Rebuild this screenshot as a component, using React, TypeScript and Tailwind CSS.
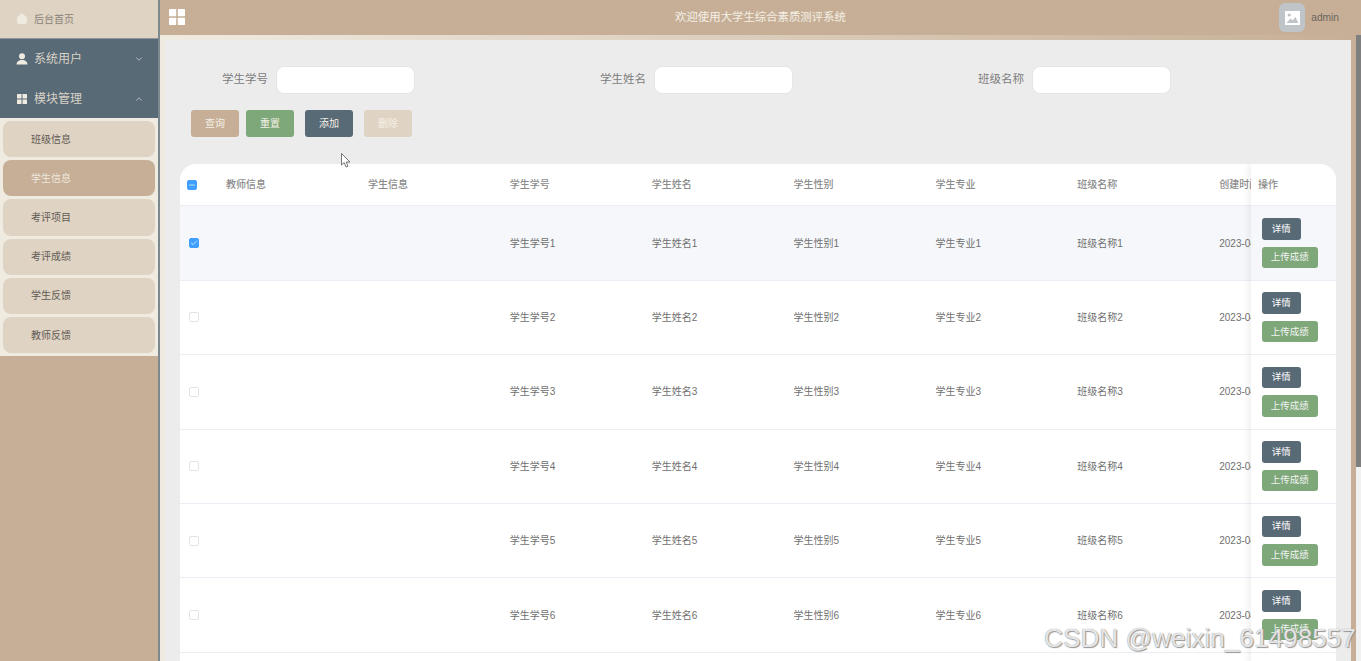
import { ChevronDown, ChevronUp, Check, House, Minus } from "lucide-react";

const FONT = "font-['Liberation_Sans','Noto_Sans_CJK_SC',sans-serif]";
const columns = ["教师信息", "学生信息", "学生学号", "学生姓名", "学生性别", "学生专业", "班级名称", "创建时间"];
const menuItems = ["班级信息", "学生信息", "考评项目", "考评成绩", "学生反馈", "教师反馈"];
const rows = [1, 2, 3, 4, 5, 6];

function GridIcon({ size, className }: { size: number; className?: string }) {
  return (
    <svg width={size} height={size} viewBox="0 0 16 16" className={className} fill="currentColor">
      <rect x="0" y="0" width="7.2" height="7.2" rx="0.4" />
      <rect x="8.8" y="0" width="7.2" height="7.2" rx="0.4" />
      <rect x="0" y="8.8" width="7.2" height="7.2" rx="0.4" />
      <rect x="8.8" y="8.8" width="7.2" height="7.2" rx="0.4" />
    </svg>
  );
}

function PersonIcon() {
  return (
    <svg width="12" height="12" viewBox="0 0 12 12" fill="#f0ebe1">
      <circle cx="6" cy="3.2" r="3" />
      <path d="M0.5 11.5C0.5 8.8 2.6 7 6 7C9.4 7 11.5 8.8 11.5 11.5Z" />
    </svg>
  );
}

function Field({ label }: { label: string }) {
  return (
    <div className="flex w-[378px] items-center">
      <span className="w-[96px] pr-2 text-right text-[11.5px] text-[#7d7d7d]">{label}</span>
      <div className="h-[28px] w-[139px] rounded-lg border border-[#e6e6e6] bg-white" />
    </div>
  );
}

function Sidebar() {
  return (
    <aside className="flex h-full w-[160px] shrink-0 flex-col border-r-2 border-[#7c8a90] bg-[#c6af96]">
      <div className="flex h-[39px] items-center gap-[6px] border-b border-[#8d979b] bg-[#dfd3c3] pl-[16px] text-[10px] text-[#8a8278]">
        <House size={12} className="fill-[#f0ebe1] text-[#f0ebe1]" />
        后台首页
      </div>
      <div className="bg-[#586a76] text-[12px] text-[#d9d2c6]">
        <div className="flex h-[39px] items-center pl-[16px] pr-[14px]">
          <PersonIcon />
          <span className="ml-[6px] flex-1">系统用户</span>
          <ChevronDown size={10} className="text-[#c8ced0]" />
        </div>
        <div className="flex h-[40px] items-center pl-[17px] pr-[14px] pt-[1px]">
          <GridIcon size={10} className="text-[#f0ebe1]" />
          <span className="ml-[7px] flex-1">模块管理</span>
          <ChevronUp size={10} className="text-[#c8ced0]" />
        </div>
      </div>
      <div className="flex flex-col gap-[3px] bg-[#f0ebe1] px-[3px] pb-[3px] pt-[3px]">
        {menuItems.map((item) => (
          <div
            key={item}
            className={`flex h-[36.2px] items-center rounded-lg pl-[28px] text-[10px] ${
              item === "学生信息" ? "bg-[#c6af96] text-[#efe8dc]" : "bg-[#dfd3c3] text-[#5f5a54]"
            }`}
          >
            {item}
          </div>
        ))}
      </div>
    </aside>
  );
}

function Header() {
  return (
    <header className="grid h-[35px] shrink-0 grid-cols-[1fr_auto_1fr] items-center bg-[#c6af96] px-[9px]">
      <GridIcon size={16} className="-mt-[2px] text-white" />
      <div className="text-center text-[11.4px] text-[#f5f0e6]">欢迎使用大学生综合素质测评系统</div>
      <div className="flex items-center justify-end pr-[13px]">
        <div className="flex h-[29px] w-[26px] items-center justify-center rounded-md bg-[#bfc4c8]">
          <svg width="15" height="14" viewBox="0 0 15 14">
            <rect width="15" height="14" fill="#fff" />
            <circle cx="4.2" cy="4" r="1.6" fill="#bfc4c8" />
            <path d="M1.5 12L5.5 7.5L7.8 9.6L10.3 6L13.5 12Z" fill="#bfc4c8" />
          </svg>
        </div>
        <span className="ml-[6px] text-[10.2px] text-[#6b655e]">admin</span>
      </div>
    </header>
  );
}

function Box({ checked, partial }: { checked?: boolean; partial?: boolean }) {
  const on = checked || partial;
  return (
    <div
      className={`flex h-[10px] w-[10px] items-center justify-center rounded-[2px] border ${
        on ? "border-[#409eff] bg-[#409eff]" : "border-[#e2e4e8] bg-white"
      }`}
    >
      {checked ? <Check size={8} strokeWidth={2} className="text-white" /> : null}
      {partial ? <Minus size={8} strokeWidth={2} className="text-white" /> : null}
    </div>
  );
}

function Table() {
  return (
    <section className="flex h-[520px] overflow-hidden rounded-t-2xl bg-white text-[10px] text-[#6f6f6f]">
      <div className="min-w-0 flex-1 overflow-hidden">
        <div className="flex h-[42.4px] items-center border-b border-[#ebeef5] font-medium text-[#8b8b8b]">
          <div className="w-[36px] shrink-0 pl-[7px]">
            <Box partial />
          </div>
          {columns.map((col) => (
            <div key={col} className="w-[141.9px] shrink-0 whitespace-nowrap pl-[10px]">
              {col}
            </div>
          ))}
        </div>
        {rows.map((n) => (
          <div
            key={n}
            className={`flex h-[74.4px] items-center border-b border-[#ebeef5] ${n === 1 ? "bg-[#f5f7fa]" : ""}`}
          >
            <div className="w-[36px] shrink-0 pl-[9px]">
              <Box checked={n === 1} />
            </div>
            <div className="w-[141.9px] shrink-0" />
            <div className="w-[141.9px] shrink-0" />
            <div className="w-[141.9px] shrink-0 pl-[10px]">学生学号{n}</div>
            <div className="w-[141.9px] shrink-0 pl-[10px]">学生姓名{n}</div>
            <div className="w-[141.9px] shrink-0 pl-[10px]">学生性别{n}</div>
            <div className="w-[141.9px] shrink-0 pl-[10px]">学生专业{n}</div>
            <div className="w-[141.9px] shrink-0 pl-[10px]">班级名称{n}</div>
            <div className="w-[141.9px] shrink-0 pl-[10px]">2023-04-12</div>
          </div>
        ))}
      </div>
      <div className="z-10 w-[85px] shrink-0 bg-white shadow-[-3px_0_6px_rgba(0,0,0,0.06)]">
        <div className="flex h-[42.4px] items-center border-b border-[#ebeef5] pl-[7px] font-medium text-[#8b8b8b]">操作</div>
        {rows.map((n) => (
          <div
            key={n}
            className={`flex h-[74.4px] flex-col items-start justify-center gap-[7px] border-b border-[#ebeef5] pl-[11px] ${
              n === 1 ? "bg-[#f5f7fa]" : ""
            }`}
          >
            <div className="flex h-[21.5px] w-[38.5px] items-center justify-center rounded-[3px] bg-[#586a76] text-[9.5px] text-white">详情</div>
            <div className="flex h-[21.5px] w-[55.5px] items-center justify-center rounded-[3px] bg-[#7fa87a] text-[9.5px] text-[#f3f3f3]">上传成绩</div>
          </div>
        ))}
      </div>
    </section>
  );
}

export default function App() {
  return (
    <div className={`relative flex h-[661px] w-[1361px] overflow-hidden bg-[#c6af96] ${FONT}`}>
      <Sidebar />
      <div className="flex min-w-0 flex-1 flex-col">
        <Header />
        <div className="flex min-h-0 flex-1">
          <div className="min-w-0 flex-1 bg-gradient-to-r from-[#f0ebe1] to-[#c6af96] px-[5px] pt-[5px]">
            <main className="h-full overflow-hidden bg-[#ececec] px-[15px] pt-[26px]">
              <div className="flex">
                <Field label="学生学号" />
                <Field label="学生姓名" />
                <Field label="班级名称" />
              </div>
              <div className="mt-[16px] flex pl-[11px] text-[10px] text-[#f5f0e6]">
                <button className="h-[27px] w-[48px] rounded-[3px] bg-[#c6af96]">查询</button>
                <button className="ml-[7px] h-[27px] w-[48px] rounded-[3px] bg-[#7fa87a]">重置</button>
                <button className="ml-[11px] h-[27px] w-[48px] rounded-[3px] bg-[#586a76]">添加</button>
                <button className="ml-[11px] h-[27px] w-[48px] rounded-[3px] bg-[#dfd3c3]">删除</button>
              </div>
              <div className="mt-[27px]">
                <Table />
              </div>
            </main>
          </div>
          <div className="w-[5px] shrink-0 bg-[#f1f1f1]">
            <div className="h-[432px] bg-[#7f7f7f]" />
          </div>
        </div>
      </div>
      {/* mouse cursor captured in the screenshot */}
      <svg className="absolute left-[341px] top-[153px]" width="10" height="15" viewBox="0 0 10 15">
        <path d="M0.5 0.5V12L3.2 9.6L5 14L7 13.2L5.2 9H9Z" fill="#fff" stroke="#555" strokeWidth="0.8" />
      </svg>
      {/* CSDN watermark */}
      <div className="absolute left-[1044px] top-[623px] z-20 whitespace-nowrap font-['Liberation_Sans',sans-serif] text-[26.2px] leading-[30px] text-white/80 [text-shadow:0_0_1px_#777,1px_1px_1px_#999]">
        CSDN @weixin_61498557
      </div>
    </div>
  );
}
